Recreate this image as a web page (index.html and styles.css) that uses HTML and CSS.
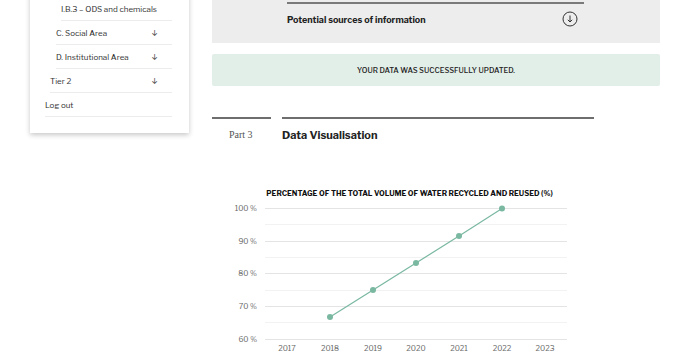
FILE: index.html
```html
<!DOCTYPE html>
<html>
<head>
<meta charset="utf-8">
<link rel="stylesheet" href="styles.css">
</head>
<body>
<div class="page">
  <aside class="sidebar">
    <div class="card">
      <div class="row lvl3"><span>I.B.3 – ODS and chemicals</span></div>
      <div class="row lvl2"><span>C. Social Area</span><span class="arr">↓</span></div>
      <div class="row lvl2"><span>D. Institutional Area</span><span class="arr">↓</span></div>
      <div class="row lvl1"><span>Tier 2</span><span class="arr">↓</span></div>
      <div class="row lvl0"><span>Log out</span></div>
    </div>
  </aside>
  <main class="main">
    <div class="greybox">
      <div class="acc">
        <span class="acc-title">Potential sources of information</span>
        <svg class="acc-icon" width="16" height="16" viewBox="0 0 16 16"><circle cx="8" cy="8" r="7" fill="none" stroke="#333" stroke-width="1"/><path d="M8 4.5v6.5M5.8 8.8L8 11l2.2-2.2" fill="none" stroke="#333" stroke-width="1"/></svg>
      </div>
    </div>
    <div class="alert">YOUR DATA WAS SUCCESSFULLY UPDATED.</div>
    <div class="section">
      <div class="part">Part 3</div>
      <div class="sec-title">Data Visualisation</div>
    </div>
    <div class="chart">
      <div class="chart-title">PERCENTAGE OF THE TOTAL VOLUME OF WATER RECYCLED AND REUSED (%)</div>
      <svg class="chart-svg" width="448" height="176" viewBox="0 0 448 176">
        <g stroke="#e4e4e4" stroke-width="1">
          <line x1="53" x2="355" y1="28.5" y2="28.5"/>
          <line x1="53" x2="355" y1="61.5" y2="61.5"/>
          <line x1="53" x2="355" y1="93.5" y2="93.5"/>
          <line x1="53" x2="355" y1="126.5" y2="126.5"/>
          <line x1="53" x2="355" y1="159.5" y2="159.5"/>
        </g>
        <g stroke="#f2f2f2" stroke-width="1">
          <line x1="53" x2="355" y1="44.5" y2="44.5"/>
          <line x1="53" x2="355" y1="77.5" y2="77.5"/>
          <line x1="53" x2="355" y1="110.5" y2="110.5"/>
          <line x1="53" x2="355" y1="142.5" y2="142.5"/>
        </g>
        <g class="ylab" text-anchor="end">
          <text x="45" y="31">100 %</text>
          <text x="45" y="64">90 %</text>
          <text x="45" y="96">80 %</text>
          <text x="45" y="129">70 %</text>
          <text x="45" y="162">60 %</text>
        </g>
        <g class="xlab" text-anchor="middle">
          <text x="75" y="171">2017</text>
          <text x="118" y="171">2018</text>
          <text x="161" y="171">2019</text>
          <text x="204" y="171">2020</text>
          <text x="247" y="171">2021</text>
          <text x="290" y="171">2022</text>
          <text x="333" y="171">2023</text>
        </g>
        <polyline points="118,137 161,110 204,83 247,56 290,28.5" fill="none" stroke="#7ab8a1" stroke-width="1.2"/>
        <g fill="#7ab8a1">
          <circle cx="118" cy="137" r="3"/>
          <circle cx="161" cy="110" r="3"/>
          <circle cx="204" cy="83" r="3"/>
          <circle cx="247" cy="56" r="3"/>
          <circle cx="290" cy="28.5" r="3"/>
        </g>
      </svg>
    </div>
  </main>
</div>
</body>
</html>
```

FILE: styles.css
```css
* { box-sizing: border-box; }
html, body { margin: 0; padding: 0; background: #fff; }
body {
  font-family: "Libre Franklin", "Inter", "Liberation Sans", sans-serif;
  color: #222;
  width: 680px;
  height: 364px;
  overflow: hidden;
}
.page {
  display: flex;
  align-items: flex-start;
}
.sidebar {
  width: 212px;
  flex: none;
  padding-left: 30px;
  padding-right: 23px;
}
.card {
  background: #fff;
  margin-top: -11px;
  padding: 8px 17px 16px 0;
  box-shadow: 0 2px 5px rgba(0,0,0,0.22);
}
.row {
  height: 24px;
  display: flex;
  align-items: center;
  justify-content: space-between;
  border-bottom: 1px solid #ececec;
  font-size: 8px;
  color: #333;
  padding-top: 1px;
  padding-right: 14px;
}
.lvl3 { margin-left: 31px; }
.lvl2 { margin-left: 26px; }
.lvl1 { margin-left: 20px; }
.lvl0 { margin-left: 15px; }
.arr { font-size: 8px; color: #444; }
.main {
  width: 448px;
  flex: none;
}
.greybox {
  background: #ededed;
  height: 43px;
  padding-top: 2px;
  padding-left: 75px;
}
.acc {
  width: 297px;
  border-top: 2px solid #7a7a7a;
  height: 31px;
  display: flex;
  align-items: center;
  justify-content: space-between;
  padding-top: 1px;
  padding-right: 6px;
}
.acc-title {
  font-size: 9px;
  font-weight: 700;
  color: #222;
}
.acc-icon { display: block; }
.alert {
  margin-top: 11px;
  height: 32px;
  background: #e2eee8;
  border-radius: 2px;
  display: flex;
  align-items: center;
  justify-content: center;
  font-size: 7.4px;
  font-weight: 500;
  color: #222;
}
.section {
  margin-top: 31px;
  display: grid;
  grid-template-columns: 59px 312px;
  column-gap: 11px;
}
.part {
  border-top: 2px solid #6e6e6e;
  padding-top: 10px;
  padding-left: 17px;
  font-family: "Liberation Serif", serif;
  font-size: 10px;
  color: #555;
}
.sec-title {
  border-top: 2px solid #6e6e6e;
  padding-top: 9px;
  font-size: 11px;
  font-weight: 700;
  color: #222;
}
.chart {
  margin-top: 46px;
}
.chart-title {
  width: 395px;
  text-align: center;
  font-size: 7.4px;
  font-weight: 700;
  color: #111;
  height: 12px;
  line-height: 12px;
}
.chart-svg { display: block; margin-top: -20px; }
.ylab text, .xlab text {
  font-family: "Libre Franklin", "Inter", "Liberation Sans", sans-serif;
  font-size: 7.5px;
  fill: #666;
}
```
